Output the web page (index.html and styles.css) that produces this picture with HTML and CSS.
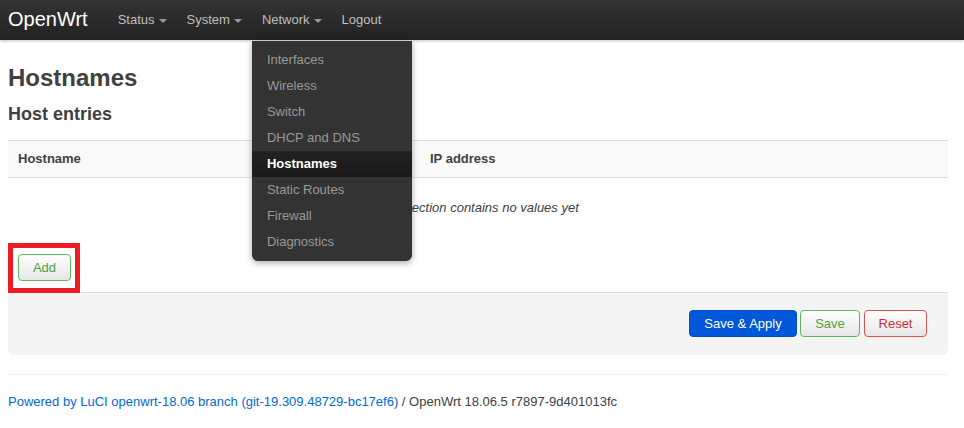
FILE: index.html
```html
<!DOCTYPE html>
<html>
<head>
<meta charset="utf-8">
<link rel="stylesheet" href="styles.css">
</head>
<body>
<header class="topbar">
  <a class="brand">OpenWrt</a>
  <ul class="nav">
    <li class="nav-item"><a>Status<span class="caret"></span></a></li>
    <li class="nav-item"><a>System<span class="caret"></span></a></li>
    <li class="nav-item open"><a>Network<span class="caret"></span></a>
      <ul class="dropdown">
        <li>Interfaces</li>
        <li>Wireless</li>
        <li>Switch</li>
        <li>DHCP and DNS</li>
        <li class="active">Hostnames</li>
        <li>Static Routes</li>
        <li>Firewall</li>
        <li>Diagnostics</li>
      </ul>
    </li>
    <li class="nav-item"><a>Logout</a></li>
  </ul>
</header>
<main class="container">
  <h2 class="page-title">Hostnames</h2>
  <h3 class="section-title">Host entries</h3>
  <table class="table">
    <thead>
      <tr><th class="col-host">Hostname</th><th>IP address</th></tr>
    </thead>
    <tbody>
      <tr><td colspan="2" class="empty"><em>This section contains no values yet</em></td></tr>
    </tbody>
  </table>
  <div class="add-row">
    <div class="highlight"><button class="btn btn-add">Add</button></div>
  </div>
  <div class="actions">
    <button class="btn btn-primary">Save &amp; Apply</button>
    <button class="btn btn-save">Save</button>
    <button class="btn btn-reset">Reset</button>
  </div>
  <footer class="footer">
    <a class="link">Powered by LuCI openwrt-18.06 branch (git-19.309.48729-bc17ef6)</a> / OpenWrt 18.06.5 r7897-9d401013fc
  </footer>
</main>
</body>
</html>
```
FILE: styles.css
```css
* { box-sizing: border-box; }
html, body { margin: 0; padding: 0; background: #fff; }
body {
  font-family: "Liberation Sans", Arial, Helvetica, sans-serif;
  font-size: 13px;
  line-height: 18px;
  color: #404040;
}
.topbar {
  height: 40px;
  background: linear-gradient(to bottom, #333333, #222222);
  box-shadow: 0 1px 3px rgba(0,0,0,0.25);
  display: flex;
  align-items: center;
  padding-left: 8px;
  position: relative;
  z-index: 10;
}
.brand {
  color: #ffffff;
  font-size: 20px;
  line-height: 40px;
  padding-right: 20px;
  margin-top: -2px;
}
.nav {
  list-style: none;
  margin: 0;
  padding: 0;
  display: flex;
  height: 40px;
}
.nav-item { position: relative; }
.nav-item > a {
  display: flex;
  align-items: center;
  height: 40px;
  padding: 0 10px;
  color: #bfbfbf;
  font-size: 13px;
}
.caret {
  display: inline-block;
  width: 0; height: 0;
  border-left: 4px solid transparent;
  border-right: 4px solid transparent;
  border-top: 4px solid #999;
  margin-left: 4px;
  margin-top: 1px;
}
.dropdown {
  position: absolute;
  top: 41px;
  left: 0;
  width: 160px;
  margin: 0;
  padding: 6px 0 6px;
  list-style: none;
  background: #333333;
  border-radius: 0 0 6px 6px;
  box-shadow: 0 2px 6px rgba(0,0,0,0.35);
}
.dropdown li {
  padding: 4px 15px 4px 15px;
  line-height: 18px;
  color: #999999;
  font-size: 13px;
}
.dropdown li.active {
  background: linear-gradient(to bottom, #222222, #191919);
  color: #ffffff;
  font-weight: bold;
}
.container {
  width: 940px;
  margin-left: 8px;
}
.page-title {
  margin: 24px 0 0;
  font-size: 24px;
  line-height: 28px;
  font-weight: bold;
  color: #404040;
}
.section-title {
  margin: 10px 0 0;
  font-size: 18px;
  line-height: 24px;
  font-weight: bold;
  color: #404040;
}
.table {
  width: 100%;
  border-collapse: collapse;
  margin-top: 14px;
}
.table th {
  text-align: left;
  padding: 9px 10px 9px;
  line-height: 18px;
  background: #f9f9f9;
  border-top: 1px solid #dddddd;
  border-bottom: 1px solid #dddddd;
  font-weight: bold;
}
.table th.col-host { width: 412px; }
.table td.empty {
  text-align: center;
  padding: 21px 10px 0;
  color: #404040;
}
.add-row {
  padding-top: 26px;
}
.highlight {
  display: inline-block;
  border: 5px solid #ed1c24;
  padding: 6px 4px 7px 5px;
}
.btn {
  font-family: "Liberation Sans", Arial, Helvetica, sans-serif;
  font-size: 13px;
  line-height: 16px;
  height: 27px;
  padding: 4px 13px;
  border-radius: 4px;
  border: 1px solid #ccc;
  background: linear-gradient(to bottom, #ffffff, #e6e6e6);
  cursor: pointer;
  vertical-align: top;
}
.btn-add { color: #4aa33a; border-color: #5cb85c; width: 53px; padding: 4px 0; display: block; }
.actions {
  background: #f4f4f4;
  border-top: 1px solid #dddddd;
  border-radius: 0 0 6px 6px;
  height: 63px;
  padding: 17px 21px 0 0;
  display: flex;
  justify-content: flex-end;
  gap: 3px;
  margin-top: -1px;
}
.btn-primary {
  background: #0057d9;
  border-color: #0050c8;
  color: #fff;
  width: 108px;
  padding: 4px 0;
}
.btn-save { color: #4aa33a; border-color: #5cb85c; width: 60px; padding: 4px 0; }
.btn-reset { color: #c9302c; border-color: #d9534f; width: 63px; padding: 4px 0; margin-left: 1px; }
.footer {
  margin-top: 19px;
  border-top: 1px solid #eeeeee;
  padding-top: 18px;
  font-size: 13px;
  line-height: 18px;
  color: #404040;
}
.link { color: #0069d6; text-decoration: none; }
```
